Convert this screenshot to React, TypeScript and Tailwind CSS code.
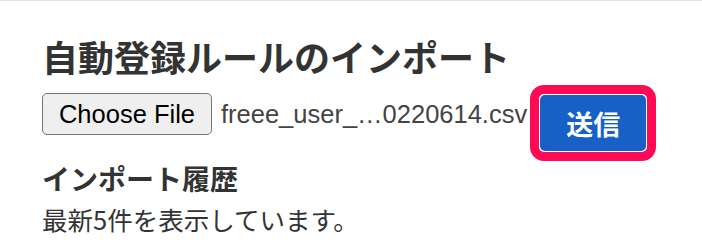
import React from "react";

const jp = '"Noto Sans CJK JP", "Liberation Sans", sans-serif';
const latin = '"Liberation Sans", Arial, sans-serif';

function FilePicker() {
    return (
        <label className="mt-[8px] flex h-[42px] items-center" style={{ fontFamily: latin }}>
            <span className="flex h-[42px] w-[170px] items-center justify-center rounded-[5px] border border-[#767676] bg-[#efefef] text-[25.5px] text-black">
                Choose File
            </span>
            <span className="ml-[9px] whitespace-nowrap text-[25.5px] text-[#444]">freee_user_…0220614.csv</span>
        </label>
    );
}

export default function App() {
    return (
        <div className="min-h-screen border-t border-[#e3e3e3] bg-white pl-[42px] pt-[37px] text-[#333]" style={{ fontFamily: jp }}>
            <h1 className="text-[36px] font-bold leading-[36px]">自動登録ルールのインポート</h1>
            <form className="mt-[11px] flex items-start" onSubmit={(e) => e.preventDefault()}>
                <FilePicker />
                {/* highlight around the submit button */}
                <div className="ml-[3px] rounded-[14px] border-[9px] border-[#ff0a54] bg-white p-px">
                    <button
                        type="submit"
                        className="flex h-[56px] w-[106px] items-center justify-center rounded-[5px] bg-[#1660c6] text-[27px] font-bold leading-none text-white"
                    >
                        送信
                    </button>
                </div>
            </form>
            <h2 className="mt-[3px] text-[28px] font-bold leading-[28px]">インポート履歴</h2>
            <p className="mt-[14px] text-[25.5px] leading-[26px]">最新5件を表示しています。</p>
        </div>
    );
}
